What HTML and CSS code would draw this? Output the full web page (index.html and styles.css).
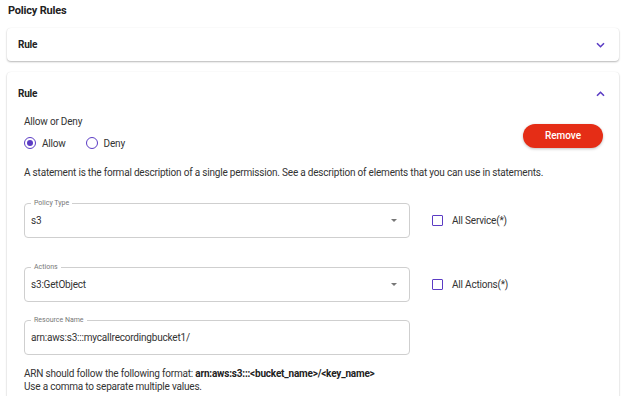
FILE: index.html
```html
<!DOCTYPE html>
<html lang="en">
<head>
  <meta charset="UTF-8">
  <title>Policy Rules</title>
  <link rel="stylesheet" href="styles.css">
</head>
<body>
  <div class="page">
    <h2 class="page-title">Policy Rules</h2>

    <div class="card">
      <div class="card-head">
        <span class="card-title">Rule</span>
        <svg class="chevron" width="9" height="6" viewBox="0 0 9 6"><path d="M1 1.2l3.5 3.5 3.5-3.5" fill="none" stroke="#5b3cc4" stroke-width="1.6"/></svg>
      </div>
    </div>

    <div class="card card-open">
      <div class="card-head card-head-open">
        <span class="card-title">Rule</span>
        <svg class="chevron" width="9" height="6" viewBox="0 0 9 6"><path d="M1 4.8l3.5-3.5 3.5 3.5" fill="none" stroke="#5b3cc4" stroke-width="1.6"/></svg>
      </div>
      <div class="card-body">
        <div class="effect-row">
          <div class="effect">
            <div class="effect-label">Allow or Deny</div>
            <div class="radios">
              <label class="radio"><span class="radio-dot checked"></span>Allow</label>
              <label class="radio"><span class="radio-dot"></span>Deny</label>
            </div>
          </div>
          <button class="remove-btn">Remove</button>
        </div>

        <p class="desc">A statement is the formal description of a single permission. See a description of elements that you can use in statements.</p>

        <div class="field-row">
          <div class="field">
            <span class="field-label">Policy Type</span>
            <span class="field-value">s3</span>
            <span class="select-arrow"></span>
          </div>
          <label class="check"><span class="check-box"></span>All Service(*)</label>
        </div>

        <div class="field-row row-actions">
          <div class="field">
            <span class="field-label">Actions</span>
            <span class="field-value">s3:GetObject</span>
            <span class="select-arrow"></span>
          </div>
          <label class="check"><span class="check-box"></span>All Actions(*)</label>
        </div>

        <div class="field-row row-resource">
          <div class="field">
            <span class="field-label">Resource Name</span>
            <span class="field-value">arn:aws:s3:::mycallrecordingbucket1/</span>
          </div>
        </div>

        <p class="hint">ARN should follow the following format: <b>arn:aws:s3:::&lt;bucket_name&gt;/&lt;key_name&gt;</b><br>Use a comma to separate multiple values.</p>
      </div>
    </div>
  </div>
</body>
</html>
```

FILE: styles.css
```css
* {
  margin: 0;
  padding: 0;
  box-sizing: border-box;
}
body {
  font-family: Roboto, 'Liberation Sans', sans-serif;
  background: #ffffff;
  color: #333;
  font-size: 10px;
  letter-spacing: -0.2px;
  overflow: hidden;
}
.page {
  padding: 4px 5px 0 7px;
}
.page-title {
  font-size: 11px;
  font-weight: 700;
  color: #222;
  line-height: 14px;
  margin: 0 0 10px 1px;
}
.card {
  background: #fff;
  border-radius: 4px;
  box-shadow: 0 1px 2px rgba(0,0,0,0.28), 0 0 1px rgba(0,0,0,0.08);
  margin-bottom: 11px;
}
.card-head {
  height: 33px;
  padding: 0 14px 0 11px;
  display: flex;
  align-items: center;
  justify-content: space-between;
}
.card-head-open {
  height: 43px;
}
.card-title {
  font-weight: 700;
  font-size: 10px;
  color: #222;
}
.card-open {
  height: 340px;
}
.card-body {
  padding: 0 15px 0 17px;
}
.effect-row {
  display: flex;
  align-items: center;
  justify-content: space-between;
  padding-right: 1px;
}
.effect-label {
  line-height: 14px;
  color: #333;
}
.radios {
  display: flex;
  gap: 20px;
  height: 22px;
  align-items: center;
  margin-top: 3px;
}
.radio {
  display: flex;
  align-items: center;
  gap: 6px;
}
.radio-dot {
  width: 12px;
  height: 12px;
  border: 1.6px solid #5b3cc4;
  border-radius: 50%;
  display: flex;
  align-items: center;
  justify-content: center;
}
.radio-dot.checked::after {
  content: "";
  width: 6px;
  height: 6px;
  border-radius: 50%;
  background: #5b3cc4;
}
.remove-btn {
  width: 80px;
  height: 24px;
  border: none;
  border-radius: 12px;
  background: #e52d16;
  color: #fff;
  font-family: inherit;
  font-size: 10px;
  font-weight: 500;
  box-shadow: 0 1px 3px rgba(0,0,0,0.25);
  margin-top: 2px;
}
.desc {
  line-height: 14px;
  margin-top: 12px;
}
.field-row {
  display: flex;
  align-items: center;
  gap: 22px;
  margin-top: 23px;
}
.row-actions {
  margin-top: 29px;
}
.row-resource {
  margin-top: 18px;
}
.field {
  position: relative;
  width: 386px;
  height: 35px;
  border: 1px solid #cfcfcf;
  border-radius: 4px;
  display: flex;
  align-items: center;
  padding: 0 8px 0 6px;
}
.field-label {
  position: absolute;
  top: -5px;
  left: 6px;
  padding: 0 3px;
  background: #fff;
  font-size: 7px;
  line-height: 8px;
  letter-spacing: 0;
  color: #777;
}
.field-value {
  color: #333;
  flex: 1;
}
.select-arrow {
  width: 0;
  height: 0;
  border-left: 3px solid transparent;
  border-right: 3px solid transparent;
  border-top: 3px solid #777;
  margin-right: 4px;
}
.check {
  display: flex;
  align-items: center;
  gap: 9px;
  color: #333;
}
.check-box {
  width: 11px;
  height: 11px;
  border: 1.6px solid #5b3cc4;
  border-radius: 1px;
}
.hint {
  margin-top: 12px;
  line-height: 13px;
}
.hint b {
  color: #222;
}
```
